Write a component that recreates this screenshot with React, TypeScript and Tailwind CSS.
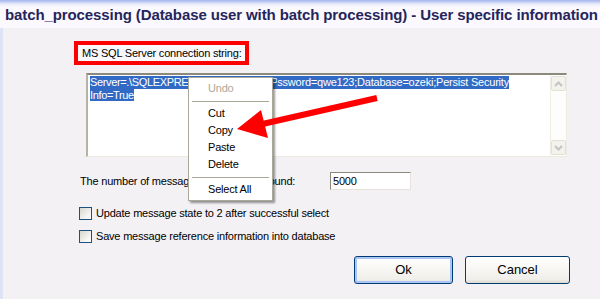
import React from "react";

const UI = { fontFamily: '"Liberation Sans", Arial, sans-serif' };

function Chevron({ up }: { up?: boolean }) {
  return (
    <svg width="9" height="6" viewBox="0 0 9 6">
      <path
        d={up ? "M1 5 L4.5 1.5 L8 5" : "M1 1 L4.5 4.5 L8 1"}
        fill="none"
        stroke="#c4c4c0"
        strokeWidth="2"
      />
    </svg>
  );
}

function MenuItem({ label, disabled }: { label: string; disabled?: boolean }) {
  return (
    <div
      className={`h-[17px] flex items-center pl-[19px] ${
        disabled ? "text-[#aca899]" : "text-black"
      }`}
    >
      {label}
    </div>
  );
}

function Sep() {
  return (
    <div className="h-[8px] flex items-center px-[3px]">
      <div className="w-full h-px bg-[#aca899]" />
    </div>
  );
}

function CheckRow({ label, className }: { label: string; className?: string }) {
  return (
    <div className={`flex items-center ml-[76px] ${className ?? ""}`}>
      <div className="w-[13px] h-[13px] border border-[#1c5180] bg-[linear-gradient(135deg,#d7d6ce_0%,#f2f2ee_60%,#ffffff_100%)]" />
      <span className="ml-[4px] text-[11px] tracking-[-0.2px] text-black leading-none">
        {label}
      </span>
    </div>
  );
}

export default function App() {
  return (
    <div
      className="relative w-[600px] h-[299px] overflow-hidden bg-[#f4f1f5]"
      style={UI}
    >
      {/* Title bar */}
      <div className="h-[28px] bg-[linear-gradient(to_bottom,#a3b3ec_0px,#e6eafb_4px,#fbf9fe_7px,#fbf9fe_100%)] flex items-center pl-[5px]">
        <span className="text-[15px] font-bold text-[#25255c] tracking-[-0.1px] whitespace-nowrap leading-none">
          batch_processing (Database user with batch processing) - User specific information
        </span>
      </div>

      {/* Body */}
      <div className="border-l-[3px] border-[#dfe3f6] h-[271px] flex flex-col">
        {/* Red label box */}
        <div className="mt-[13px] ml-[71px] w-[175px] h-[24px] border-[4px] border-[#ff0000] flex items-center pl-[4px] bg-[#f9f8fb]">
          <span className="text-[11px] tracking-[-0.2px] text-black whitespace-nowrap">
            MS SQL Server connection string:
          </span>
        </div>

        {/* Text area */}
        <div className="mt-[8px] ml-[83px] w-[481px] h-[84px] bg-white border-t-[2px] border-l-[2px] border-t-[#8b887c] border-l-[#b5b2a6] border-r border-b border-r-[#eeece2] border-b-[#eeece2] flex">
          <div className="flex-1 pl-[2px] pt-[1px] text-[11px] leading-[13px] text-white">
            <div className="flex whitespace-nowrap">
              <span className="bg-[#316ac5] tracking-[-0.35px]">Server=.\SQLEXPRE</span>
              <span className="bg-[#316ac5] w-[89px] overflow-hidden tracking-[-0.35px]">
                SS;User Id=ozeki;Pa
              </span>
              <span className="bg-[#316ac5] tracking-[-0.22px]">
                ssword=qwe123;Database=ozeki;Persist Security
              </span>
            </div>
            <div>
              <span className="bg-[#316ac5] tracking-[-0.35px]">Info=True</span>
            </div>
          </div>
          <div className="w-[16px] h-full border-l border-[#eeede6] bg-[#fdfdfc] flex flex-col justify-between items-center py-[1px]">
            <div className="w-[15px] h-[15px] rounded-[2px] bg-[#f3f2ec] border border-[#e3e1d6] flex items-center justify-center">
              <Chevron up />
            </div>
            <div className="w-[15px] h-[15px] rounded-[2px] bg-[#f3f2ec] border border-[#e3e1d6] flex items-center justify-center">
              <Chevron />
            </div>
          </div>
        </div>

        {/* Number row */}
        <div className="mt-[15px] ml-[77px] flex items-center h-[18px]">
          <span className="w-[250px] text-[11px] tracking-[-0.2px] text-black whitespace-nowrap overflow-hidden">
            The number of messages selected in a round:
          </span>
          <div className="w-[81px] h-[18px] bg-white border-t border-l border-t-[#8b887c] border-l-[#8b887c] border-r border-b border-r-[#e6e4da] border-b-[#e6e4da] flex items-center pl-[2px] text-[11px] tracking-[-0.2px] text-black">
            5000
          </div>
        </div>

        <CheckRow className="mt-[17px]" label="Update message state to 2 after successful select" />
        <CheckRow className="mt-[10px]" label="Save message reference information into database" />

        {/* Buttons */}
        <div className="mt-[13px] flex justify-end pr-[30px] gap-[12px]">
          <button className="w-[99px] h-[28px] rounded-[3px] border border-[#003c74] bg-[linear-gradient(to_bottom,#ffffff,#f0efea_85%,#dcdad0)] shadow-[inset_0_0_0_2px_#a9c4f5] text-[13px] text-black">
            Ok
          </button>
          <button className="w-[105px] h-[28px] rounded-[3px] border border-[#003c74] bg-[linear-gradient(to_bottom,#ffffff,#f0efea_85%,#dcdad0)] text-[13px] text-black">
            Cancel
          </button>
        </div>
      </div>

      {/* Context menu */}
      <div className="absolute left-[188px] top-[77px] w-[85px] bg-white border border-[#aca899] shadow-[2px_2px_2px_rgba(0,0,0,0.4)] pt-[2px] pb-[2px] text-[11px] tracking-[-0.2px] leading-none">
        <MenuItem label="Undo" disabled />
        <Sep />
        <MenuItem label="Cut" />
        <MenuItem label="Copy" />
        <MenuItem label="Paste" />
        <MenuItem label="Delete" />
        <Sep />
        <MenuItem label="Select All" />
      </div>

      {/* Red arrow */}
      <svg
        className="absolute left-0 top-0 pointer-events-none"
        width="600"
        height="299"
        viewBox="0 0 600 299"
      >
        <line x1="377" y1="98" x2="258" y2="125" stroke="#ff0000" strokeWidth="6" />
        <polygon points="237,129 261,110 268,138" fill="#ff0000" />
      </svg>
    </div>
  );
}
